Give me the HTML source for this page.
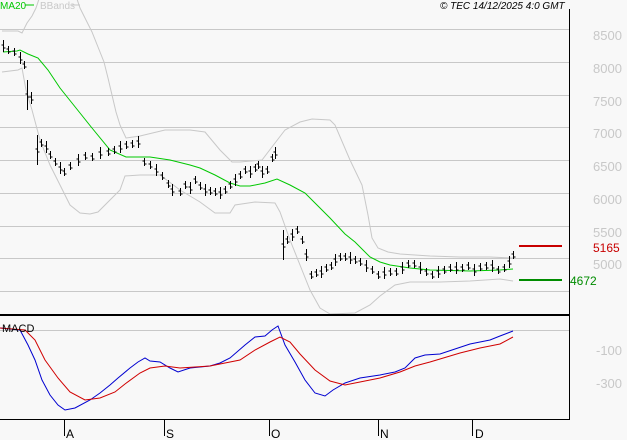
<!DOCTYPE html>
<html><head><meta charset="utf-8"><style>
html,body{margin:0;padding:0;background:#f8f8f8;}
svg{display:block;font-family:"Liberation Sans",sans-serif;}
</style></head><body>
<svg id="s" width="627" height="440" viewBox="0 0 627 440" xmlns="http://www.w3.org/2000/svg">
<rect width="627" height="440" fill="#f8f8f8"/>
<g stroke="#c8c8c8" stroke-width="1" shape-rendering="crispEdges">
<line x1="0" y1="29.5" x2="569" y2="29.5"/>
<line x1="0" y1="62.5" x2="569" y2="62.5"/>
<line x1="0" y1="95.5" x2="569" y2="95.5"/>
<line x1="0" y1="127.5" x2="569" y2="127.5"/>
<line x1="0" y1="160.5" x2="569" y2="160.5"/>
<line x1="0" y1="193.5" x2="569" y2="193.5"/>
<line x1="0" y1="226.5" x2="569" y2="226.5"/>
<line x1="0" y1="258.5" x2="569" y2="258.5"/>
<line x1="0" y1="291.5" x2="569" y2="291.5"/>
<line x1="0" y1="330.5" x2="569" y2="330.5"/>
</g>
<g fill="#c8c8c8" font-size="13">
<text x="593" y="40">8500</text><text x="593" y="73">8000</text><text x="593" y="106">7500</text>
<text x="593" y="138">7000</text><text x="593" y="171">6500</text><text x="593" y="204">6000</text>
<text x="593" y="237">5500</text><text x="593" y="269">5000</text>
<text x="596" y="355">-100</text><text x="596" y="388">-300</text>
</g>
<polyline fill="none" stroke="#c8c8c8" points="2,31 18,31 22,33 27,23 32,16 36,8 40,-4 76,-4 80,8 86,20 92,32 98,47 104,62 108,78 112,95 116,112 120,125 126,138 140,136 165,130 190,130 205,132 220,150 232,162 240,162 262,160 275,143 285,130 300,122 312,119 330,120 335,125 350,160 362,185 368,215 372,238 378,248 388,252 400,254 430,256 460,257 490,257 513,258"/>
<polyline fill="none" stroke="#c8c8c8" points="2,72 18,70 22,68 26,90 32,110 40,140 50,165 60,185 70,205 80,213 90,214 98,212 110,200 120,190 125,176 140,175 160,175 180,190 200,202 215,213 230,213 235,205 255,202 275,203 280,212 290,240 300,265 310,290 320,308 330,314 355,313 370,305 380,296 395,285 410,282 440,282 470,281 500,279 513,281"/>
<polyline fill="none" stroke="#00c800" points="3,52 17,51 20,50 28,54 38,58 48,70 60,88 80,113 92,128 110,150 126,157 150,157 170,160 190,165 200,168 215,175 230,183 240,186 250,186 265,183 277,179 290,185 305,193 315,203 330,218 345,234 355,242 370,257 380,262 390,265 410,268 430,270 470,271 500,270 513,269"/>
<g id="bars" stroke="#000" stroke-width="1" fill="none" shape-rendering="crispEdges"></g>
<line x1="519" y1="246" x2="562" y2="246" stroke="#c80000" stroke-width="2"/>
<line x1="519" y1="280" x2="562" y2="280" stroke="#008c00" stroke-width="2"/>
<text x="593" y="252" fill="#c80000" font-size="12">5165</text>
<text x="570" y="285" fill="#008c00" font-size="12">4672</text>
<polyline fill="none" stroke="#0000d0" points="0,328 20,330 28,345 35,360 42,380 50,395 58,405 65,410 75,408 90,400 100,393 110,385 118,378 130,368 138,362 145,358 150,361 160,362 170,368 178,372 190,368 210,366 220,363 230,358 245,345 255,337 265,336 272,330 278,326 285,345 295,362 305,380 315,393 325,396 333,390 345,383 360,378 380,375 395,372 405,368 415,358 425,355 440,354 455,349 470,344 490,340 500,336 513,331"/>
<polyline fill="none" stroke="#d00000" points="0,328 25,330 35,340 45,360 58,378 70,392 85,400 100,398 115,392 125,384 140,373 150,368 165,366 180,368 210,366 240,360 255,350 270,342 280,337 290,342 300,354 315,370 330,381 345,385 360,382 380,378 400,372 415,366 430,362 460,353 480,348 500,344 513,337"/>
<line x1="0" y1="315" x2="569" y2="315" stroke="#000" stroke-width="2"/>
<line x1="569.5" y1="9" x2="569.5" y2="420" stroke="#000" stroke-width="1"/>
<line x1="0" y1="419.5" x2="570" y2="419.5" stroke="#000" stroke-width="1"/>
<g stroke="#000" shape-rendering="crispEdges">
<line x1="64.5" y1="419" x2="64.5" y2="436"/><line x1="164.5" y1="419" x2="164.5" y2="436"/>
<line x1="269.5" y1="419" x2="269.5" y2="436"/><line x1="378.5" y1="419" x2="378.5" y2="436"/>
<line x1="472.5" y1="419" x2="472.5" y2="436"/>
</g>
<g font-size="12" fill="#000">
<text x="66" y="438">A</text><text x="166" y="438">S</text><text x="271" y="438">O</text>
<text x="380" y="438">N</text><text x="475" y="438">D</text>
<text x="2" y="332" font-size="11">MACD</text>
</g>
<text x="0" y="9" font-size="10" fill="#00c800">MA20</text>
<line x1="25" y1="5" x2="34" y2="5" stroke="#00c800"/>
<text x="40" y="9" font-size="10" fill="#c8c8c8">BBands</text>
<line x1="72" y1="5" x2="80" y2="5" stroke="#c8c8c8"/>
<text x="440" y="9" font-size="10" font-style="italic" fill="#000">© TEC 14/12/2025 4:0 GMT</text>
</svg>
<script>
var p=[[3,46],[8,50],[14,52],[20,58],[24,65],[27,95],[31,98],[37,150],[41,143],[46,147],[50,155],[55,162],[60,168],[64,172],[70,166],[78,160],[85,156],[92,157],[100,153],[108,152],[114,150],[120,147],[126,145],[132,144],[138,142],[144,162],[150,165],[156,170],[162,176],[168,184],[172,190],[180,192],[185,185],[190,188],[195,180],[200,186],[205,190],[210,191],[215,192],[220,193],[225,190],[230,185],[235,180],[240,175],[245,170],[250,172],[255,168],[258,165],[262,172],[267,170],[272,158],[275,153],[283,245],[287,240],[292,235],[297,230],[302,240],[306,255],[311,275],[316,273],[321,272],[326,268],[331,266],[335,260],[340,257],[345,257],[350,258],[355,260],[360,262],[366,266],[372,270],[378,275],[384,273],[390,272],[396,272],[402,268],[408,264],[414,264],[420,268],[426,272],[432,275],[438,272],[444,270],[450,268],[456,268],[462,268],[468,266],[474,270],[480,267],[486,266],[492,266],[498,270],[504,268],[509,262],[513,255]];
var d="";
for(var i=0;i<p.length;i++){var x=p[i][0]+0.5,y=p[i][1],h=(i%3==0)?6:4;
if(i==5||i==7||i==52)h=15;
d+="M"+x+" "+(y-h)+"V"+(y+h)+"M"+(x-2)+" "+(y-1)+"H"+x+"M"+x+" "+(y+2)+"H"+(x+2);}
var g=document.getElementById("bars");
var pa=document.createElementNS("http://www.w3.org/2000/svg","path");
pa.setAttribute("d",d);g.appendChild(pa);
</script>
</body></html>
